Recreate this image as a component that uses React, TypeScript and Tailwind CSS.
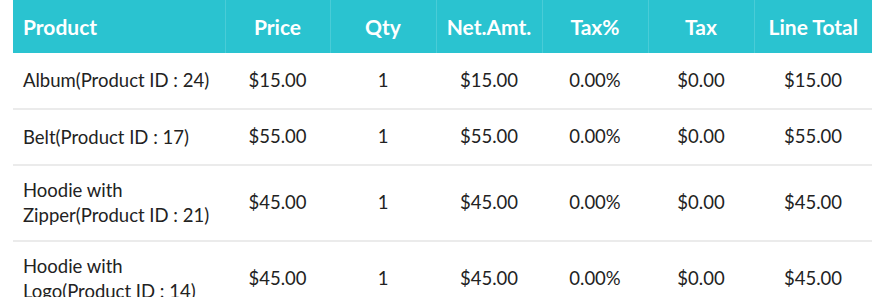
const rows = [
  { name: "Album(Product ID : 24)", price: "$15.00", qty: "1", net: "$15.00", taxPct: "0.00%", tax: "$0.00", total: "$15.00" },
  { name: "Belt(Product ID : 17)", price: "$55.00", qty: "1", net: "$55.00", taxPct: "0.00%", tax: "$0.00", total: "$55.00" },
  { name: "Hoodie with Zipper(Product ID : 21)", price: "$45.00", qty: "1", net: "$45.00", taxPct: "0.00%", tax: "$0.00", total: "$45.00" },
  { name: "Hoodie with Logo(Product ID : 14)", price: "$45.00", qty: "1", net: "$45.00", taxPct: "0.00%", tax: "$0.00", total: "$45.00" },
];

const heads = ["Price", "Qty", "Net.Amt.", "Tax%", "Tax", "Line Total"];

export default function App() {
  return (
    <div className="w-[883px] h-[297px] overflow-hidden bg-white pl-[13px] font-['Lato',sans-serif]">
      <table className="w-[859px] table-fixed border-collapse">
        <colgroup>
          <col className="w-[212px]" />
          <col className="w-[105px]" />
          <col className="w-[106px]" />
          <col className="w-[106px]" />
          <col className="w-[106px]" />
          <col className="w-[106px]" />
          <col className="w-[118px]" />
        </colgroup>
        <thead>
          <tr className="h-[53px] bg-[#2ac3d0] text-white text-[21px] font-bold">
            <th className="text-left pl-[10px] border-r border-white/15">Product</th>
            {heads.map((h, i) => (
              <th key={h} className={`text-center ${i < heads.length - 1 ? "border-r border-white/15" : ""}`}>
                {h}
              </th>
            ))}
          </tr>
        </thead>
        <tbody className="text-[18.5px] text-[#222]">
          {rows.map((r, i) => (
            <tr key={i} className={`border-b-2 border-[#ebebeb] ${i < 2 ? "h-[56px]" : "h-[76px]"}`}>
              <td className="pl-[10px] pr-[6px] leading-[25px]">{r.name}</td>
              <td className="text-center">{r.price}</td>
              <td className="text-center">{r.qty}</td>
              <td className="text-center">{r.net}</td>
              <td className="text-center">{r.taxPct}</td>
              <td className="text-center">{r.tax}</td>
              <td className="text-center">{r.total}</td>
            </tr>
          ))}
        </tbody>
      </table>
    </div>
  );
}
